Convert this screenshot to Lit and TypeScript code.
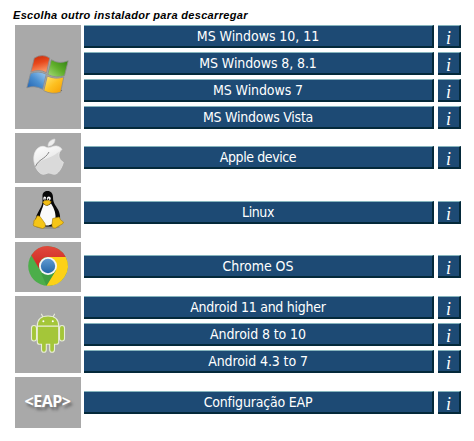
import { LitElement, html, css, svg } from "lit";
import { customElement, property } from "lit/decorators.js";

const windowsIcon = svg`<svg class="icon" width="66" height="104" viewBox="0 0 66 104">
  <defs>
    <linearGradient id="r" x1="0" y1="0" x2="0.3" y2="1"><stop offset="0" stop-color="#c52a08"/><stop offset="0.5" stop-color="#e8481c"/><stop offset="1" stop-color="#f79463"/></linearGradient>
    <linearGradient id="g" x1="1" y1="0" x2="0" y2="1"><stop offset="0" stop-color="#2f7d12"/><stop offset="0.5" stop-color="#5fae2a"/><stop offset="1" stop-color="#a8dc7c"/></linearGradient>
    <linearGradient id="b" x1="0" y1="1" x2="1" y2="0"><stop offset="0" stop-color="#1f5fae"/><stop offset="0.5" stop-color="#4a8fd0"/><stop offset="1" stop-color="#a4cdf0"/></linearGradient>
    <linearGradient id="y" x1="1" y1="1" x2="0" y2="0"><stop offset="0" stop-color="#f59a00"/><stop offset="0.5" stop-color="#fdc020"/><stop offset="1" stop-color="#ffe878"/></linearGradient>
  </defs>
  <g stroke="#8b8b8b" stroke-width="0.8" stroke-linejoin="round">
    <path fill="url(#r)" d="M19.3 33 Q27.5 28.2 34.7 33 L31.5 47.8 Q24 43.5 15.8 47.2 Z"/>
    <path fill="url(#g)" d="M36.3 34.7 Q44 39.5 53.2 35.8 L49.5 50.8 Q41 53.5 32.8 49.5 Z"/>
    <path fill="url(#b)" d="M15.5 48.6 Q23 45.2 31.2 49.2 L27.7 64.3 Q20 60 11.8 62.8 Z"/>
    <path fill="url(#y)" d="M32.3 51 Q40 54.7 48.8 52 L45.7 67.2 Q37 70 28.8 65.7 Z"/>
  </g>
  <circle cx="46.5" cy="65.5" r="0.6" fill="#666"/>
</svg>`;

const appleIcon = svg`<svg class="icon" width="66" height="50" viewBox="0 0 66 50">
  <defs><linearGradient id="a" x1="0" y1="0" x2="0.4" y2="1"><stop offset="0" stop-color="#fff"/><stop offset="1" stop-color="#dcdcdc"/></linearGradient></defs>
  <path fill="url(#a)" stroke="#e6e6e6" stroke-width="0.7" d="M33 14.8 C36 14.8 38 12.7 41.5 13 C44 13.2 46 14.8 47 16.5 C42.5 19.5 43 26.5 48.4 29.3 C47 35 43 41.3 39.5 41.3 C37 41.3 36 40 33.7 40 C31.5 40 30.5 41.5 28 41.3 C23 40.8 18.5 32 18.8 25 C19 17.5 23.5 13.3 28 13.3 C30 13.3 31.5 14.8 33 14.8 Z"/>
  <path fill="#dadada" d="M20.5 33.5 C24 25.5 34 27.5 44 18.8 C42.8 23 44 27 48 29.5 C46.5 35 43 41 39.5 41 C37 41 36 39.7 33.7 39.7 C31.5 39.7 30.5 41.2 28 41 C25 40.7 22.4 37.5 20.5 33.5 Z"/>
  <path fill="none" stroke="#858585" stroke-width="1" d="M20.5 33.5 C23.5 26 30 26.5 34 19"/>
  <path fill="#eee" stroke="#d4d4d4" stroke-width="0.6" d="M33 13.2 C32.6 9.5 36 6.2 40 6 C40.4 9.8 37 13.4 33 13.2 Z"/>
</svg>`;

const linuxIcon = svg`<svg class="icon" width="66" height="51" viewBox="0 0 66 51">
  <ellipse cx="33" cy="40" rx="12" ry="1.8" fill="#8e8e8e"/>
  <path fill="#080808" d="M27.5 9 C27.5 5.5 29.5 4 32.5 4 C36 4 38 6.5 38 10.5 C38 16 40.5 18 43 22.5 C45.5 27 45.5 32 44.5 35 L40 39.5 L26 39.5 L20.5 32 C21.5 27 24 24 26 20 C28 16.5 27.5 13 27.5 9 Z"/>
  <path fill="#fafafa" d="M28.5 17 Q32.5 20.5 36 16.5 C38 19.5 41 25 40.5 31 C40 36 36 38.5 32 38.5 C29 38.5 28 36 25 31 C24.5 26 28 21 28.5 17 Z"/>
  <ellipse cx="29.7" cy="11.6" rx="1.4" ry="2" fill="#fff"/><ellipse cx="33.8" cy="11.6" rx="1.9" ry="2.2" fill="#fff"/>
  <circle cx="30" cy="12.2" r="0.7"/><circle cx="33.5" cy="12.2" r="0.8"/>
  <path fill="#f2bd12" stroke="#a98108" stroke-width="0.4" d="M27.7 15 Q31 11.8 36.3 14.7 Q34.8 18.2 31.2 18.4 Q29 17.8 27.7 15 Z"/>
  <path fill="#f5c518" stroke="#a37b08" stroke-width="0.6" stroke-linejoin="round" d="M22 29 Q25 28 26.5 31.5 L30 36.5 Q31.5 40.5 27.5 41.5 L18.8 39 Q17.8 37.8 18.8 36 Q18.2 32.8 20.5 32.5 Z"/>
  <path fill="#f5c518" stroke="#a37b08" stroke-width="0.6" stroke-linejoin="round" d="M37.7 31.5 L44.2 30 Q45 33.5 48.5 35 Q48.5 37 45 38.3 L40.2 41.2 Q36.5 41.2 37 37.5 Z"/>
</svg>`;

const chromeIcon = svg`<svg class="icon" width="66" height="50" viewBox="0 0 66 50">
  <defs>
    <linearGradient id="cr" x1="0" y1="0" x2="0" y2="1"><stop offset="0" stop-color="#e0483c"/><stop offset="1" stop-color="#cc241c"/></linearGradient>
    <linearGradient id="cb" x1="0" y1="0" x2="0" y2="1"><stop offset="0" stop-color="#5f9ad0"/><stop offset="1" stop-color="#2466a8"/></linearGradient>
  </defs>
  <circle cx="33" cy="24" r="19.8" fill="#4cae4a"/>
  <path fill="#fdd116" d="M33 15 L50.7 15 A19.8 19.8 0 0 1 31.5 43.7 L40.8 28.5 Z"/>
  <path fill="url(#cr)" d="M16.3 13.3 A19.8 19.8 0 0 1 50.7 15 L33 15 A9 9 0 0 0 25.2 28.5 Z"/>
  <path fill="#2f8d39" opacity=".5" d="M31.5 43.7 L40.8 28.5 L33 33 L26 31 Z"/>
  <circle cx="33" cy="24" r="9" fill="#f5f5f5"/>
  <circle cx="33" cy="24" r="7.2" fill="url(#cb)"/>
</svg>`;

const androidIcon = svg`<svg class="icon" width="66" height="77" viewBox="0 0 66 77">
  <g fill="#a4c639" stroke="#e9eed9" stroke-width="1.1">
    <path fill="none" stroke-linecap="round" d="M26.5 18.2 L28 21 M39.5 18.2 L38 21"/>
    <rect x="16.5" y="29.5" width="5" height="15.5" rx="2.5"/>
    <rect x="44.5" y="29.5" width="5" height="15.5" rx="2.5"/>
    <path d="M22.3 30 H43.7 V46 Q43.7 48.3 41.5 48.3 H39.5 V53.5 Q39.5 56.3 37 56.3 Q34.7 56.3 34.7 53.5 V48.3 H31.3 V53.5 Q31.3 56.3 29 56.3 Q26.5 56.3 26.5 53.5 V48.3 H24.5 Q22.3 48.3 22.3 46 Z"/>
    <path d="M22.3 30 C22.3 23.5 26.5 20 33 20 C39.5 20 43.7 23.5 43.7 30 Z"/>
  </g>
  <circle cx="28.4" cy="25.2" r="1" fill="#fff"/><circle cx="37.8" cy="25.2" r="1" fill="#fff"/>
</svg>`;

// Each installer: its label and the label's tracking in pixels.
type Installer = [string, number];

const groups: { size: string; icon: unknown; items: Installer[] }[] = [
  { size: "h104", icon: windowsIcon, items: [["MS Windows 10, 11", -0.05], ["MS Windows 8, 8.1", -0.1], ["MS Windows 7", -0.1], ["MS Windows Vista", -0.25]] },
  { size: "h50", icon: appleIcon, items: [["Apple device", -0.4]] },
  { size: "h51", icon: linuxIcon, items: [["Linux", -0.4]] },
  { size: "h50", icon: chromeIcon, items: [["Chrome OS", -0.05]] },
  { size: "h77", icon: androidIcon, items: [["Android 11 and higher", -0.25], ["Android 8 to 10", -0.1], ["Android 4.3 to 7", -0.1]] },
  { size: "h51", icon: html`<span class="eap">&lt;EAP&gt;</span>`, items: [["Configuração EAP", -0.2]] },
];

@customElement("installer-row")
class InstallerRow extends LitElement {
  @property() label = "";
  @property({ type: Number }) tracking = 0;

  static styles = css`
    :host { display: flex; gap: 4px; height: 23px; }
    button {
      box-sizing: border-box; height: 23px; margin: 0; padding: 0;
      border: solid; border-width: 1px 2px 2px 0;
      border-color: #86b4bd #04293a #04293a #1d4a74;
      background: #1d4a74; color: #fff; white-space: nowrap;
    }
    .install { width: 350px; font: 14px/19px "DejaVu Sans Condensed", "DejaVu Sans", sans-serif; padding-top: 1px; }
    .info { width: 23px; font: italic 18px/20px "Liberation Serif", serif; padding-top: 2px; }
  `;

  render() {
    return html`<button class="install" style="letter-spacing:${this.tracking}px">${this.label}</button><button class="info">i</button>`;
  }
}

@customElement("app-root")
class AppRoot extends LitElement {
  static styles = css`
    :host { display: block; box-sizing: border-box; height: 441px; padding: 7px 13px 0 15px; background: #fff; overflow: hidden; }
    h1 { margin: 0 0 0 -2px; height: 18px; font: italic bold 11px/16px "Liberation Sans", sans-serif; letter-spacing: 0.33px; white-space: nowrap; color: #000; }
    .groups { display: flex; flex-direction: column; gap: 4px; }
    .group { display: flex; gap: 3px; align-items: center; }
    .tile { width: 66px; height: 100%; background: #a9a9a9; display: flex; align-items: center; justify-content: center; }
    .icon { display: block; }
    .rows { display: flex; flex-direction: column; gap: 4px; }
    .h104 { height: 104px; }
    .h50 { height: 50px; }
    .h50 .rows { margin-bottom: 1px; }
    .h51 { height: 51px; }
    .h77 { height: 77px; }
    .eap { font: bold 16px/20px "Open Sans", sans-serif; color: #fff; text-shadow: 2px 3px 3px #666; letter-spacing: -0.5px; padding-bottom: 4px; margin-left: -1px; }
  `;

  render() {
    return html`
      <h1>Escolha outro instalador para descarregar</h1>
      <div class="groups">
        ${groups.map((g) => html`<div class="group ${g.size}">
          <div class="tile">${g.icon}</div>
          <div class="rows">${g.items.map(([label, tracking]) => html`<installer-row .label=${label} .tracking=${tracking}></installer-row>`)}</div>
        </div>`)}
      </div>`;
  }
}
